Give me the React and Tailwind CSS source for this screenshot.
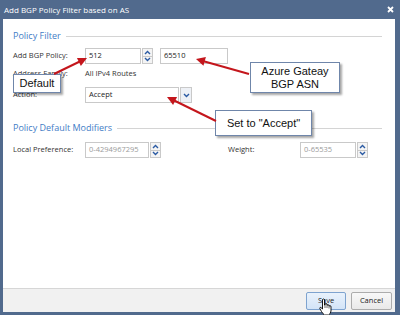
import React from "react";

const F = { fontFamily: '"Open Sans", "Noto Sans", sans-serif' };

function Chev({ up }) {
  return (
    <svg width="7" height="5" viewBox="0 0 7 5">
      <path d={up ? "M1 4 L3.5 1.5 L6 4" : "M1 1 L3.5 3.5 L6 1"} fill="none" stroke="#2a5aa3" strokeWidth="1.4" />
    </svg>
  );
}

function Spinner() {
  return (
    <div className="flex flex-col w-[11px] h-[16px] ml-[1px]">
      <div className="flex-1 flex items-center justify-center border border-[#c9c9c9] bg-[#f4f4f4]"><Chev up /></div>
      <div className="flex-1 flex items-center justify-center border border-t-0 border-[#c9c9c9] bg-[#f4f4f4]"><Chev /></div>
    </div>
  );
}

function Input({ w, value, placeholder }) {
  return (
    <div className={`h-[16px] border border-[#c9c9c9] bg-white flex items-center px-[3px] text-[7.5px] ${w} ${placeholder ? "text-[#9a9a9a]" : "text-[#222]"}`}>
      {value || placeholder}
    </div>
  );
}

function Arrow({ x1, y1, x2, y2 }) {
  const dx = x2 - x1, dy = y2 - y1;
  const L = Math.hypot(dx, dy);
  const ux = dx / L, uy = dy / L;
  const hl = 9, hw = 4.5;
  const bx = x2 - ux * hl, by = y2 - uy * hl;
  const p = `${x2},${y2} ${bx - uy * hw},${by + ux * hw} ${bx + uy * hw},${by - ux * hw}`;
  return (
    <g>
      <line x1={x1} y1={y1} x2={bx + ux} y2={by + uy} stroke="#c4161c" strokeWidth="2" />
      <polygon points={p} fill="#c4161c" />
    </g>
  );
}

function Callout({ cls, children }) {
  return (
    <div
      className={`absolute bg-white border border-[#6f86aa] shadow-[2px_2px_2px_rgba(0,0,0,0.35)] flex flex-col items-center justify-center text-[11px] leading-[13px] text-[#111] ${cls}`}
      style={{ fontFamily: '"Liberation Sans", Arial, sans-serif' }}
    >
      {children}
    </div>
  );
}

export default function App() {
  return (
    <div className="relative w-[400px] h-[315px] bg-[#516a8d] flex flex-col overflow-hidden" style={F}>
      <div className="h-[19px] flex items-center justify-between pl-[4px] pr-[6px] text-white text-[8px]">
        <span>Add BGP Policy Filter based on AS</span>
        <svg width="7" height="7" viewBox="0 0 7 7">
          <path d="M1 1 L6 6 M6 1 L1 6" stroke="white" strokeWidth="1.8" />
        </svg>
      </div>
      <div className="flex-1 ml-[3px] mr-[5px] mb-[3px] bg-white flex flex-col">
        <div className="flex-1 flex flex-col pl-[10px] pr-[13px]">
          <div className="mt-[11px] h-[12px] flex items-center gap-[5px]">
            <span className="text-[9px] text-[#3f7dc6]">Policy Filter</span>
            <div className="flex-1 h-px bg-[#d4d4d4]" />
          </div>
          <div className="mt-[6px] h-[16px] flex items-center text-[7.5px] text-[#333]">
            <span className="w-[72px]">Add BGP Policy:</span>
            <Input w="w-[56px]" value="512" />
            <Spinner />
            <div className="w-[7px]" />
            <Input w="w-[68px]" value="65510" />
          </div>
          <div className="mt-[4px] h-[12px] flex items-center text-[7.5px] text-[#333]">
            <span className="w-[72px]">Address Family:</span>
            <span>All IPv4 Routes</span>
          </div>
          <div className="mt-[7px] h-[16px] flex items-center text-[7.5px] text-[#333]">
            <span className="w-[72px]">Action:</span>
            <div className="w-[94px] h-[16px] border border-[#c9c9c9] flex items-center px-[3px] text-[#222]">Accept</div>
            <div className="ml-[1px] w-[12px] h-[16px] border border-[#c9c9c9] bg-[#eef1f6] flex items-center justify-center"><Chev /></div>
          </div>
          <div className="mt-[19px] h-[12px] flex items-center gap-[5px]">
            <span className="text-[9px] text-[#3f7dc6]">Policy Default Modifiers</span>
            <div className="flex-1 h-px bg-[#d4d4d4]" />
          </div>
          <div className="mt-[8px] h-[16px] flex items-center text-[7.5px] text-[#333]">
            <span className="w-[72px]">Local Preference:</span>
            <Input w="w-[64px]" placeholder="0-4294967295" />
            <Spinner />
            <div className="w-[67px]" />
            <span className="w-[72px]">Weight:</span>
            <Input w="w-[56px]" placeholder="0-65535" />
            <Spinner />
          </div>
        </div>
        <div className="h-[24px] border-t border-[#d6d6d6] bg-[#f1f1f1] flex items-center justify-end gap-[5px] pr-[3px] text-[7.5px] text-[#222]">
          <div className="w-[40px] h-[18px] rounded-[2px] border border-[#7ea3cf] bg-[linear-gradient(#e9f2fc,#d3e4f7)] flex items-center justify-center">Save</div>
          <div className="w-[41px] h-[18px] rounded-[2px] border border-[#acacac] bg-[linear-gradient(#f8f8f8,#e9e9e9)] flex items-center justify-center">Cancel</div>
        </div>
      </div>

      <Callout cls="left-[13px] top-[74px] w-[48px] h-[19px]">Default</Callout>
      <Callout cls="left-[250px] top-[62px] w-[90px] h-[31px]">
        <span>Azure Gateay</span>
        <span>BGP ASN</span>
      </Callout>
      <Callout cls="left-[215px] top-[110px] w-[97px] h-[26px]">Set to "Accept"</Callout>

      <svg className="absolute inset-0 pointer-events-none" width="400" height="315">
        <Arrow x1={54} y1={74} x2={87} y2={58} />
        <Arrow x1={249} y1={74} x2={196} y2={59} />
        <Arrow x1={216} y1={121} x2={167} y2={97} />
      </svg>

      <svg className="absolute left-[319px] top-[298px] pointer-events-none" width="13" height="18" viewBox="0 0 13 18">
        <path
          d="M3.5 1.5 Q4.5 0.5 5.5 1.5 L5.5 7 L6 7 L6 6 Q7 5 8 6 L8 7.2 Q9 6.3 10 7.2 L10 8 Q11 7.4 12 8.2 L12 13 Q11.5 16 9.5 17 L5.5 17 Q4 16 2.5 13.5 L0.8 10.5 Q0.6 9.3 1.8 9.4 L3.5 11 Z"
          fill="white"
          stroke="black"
          strokeWidth="0.9"
        />
        <path d="M6 7 L6 10 M8 7.2 L8 10 M10 8 L10 10.5" stroke="black" strokeWidth="0.6" />
      </svg>
    </div>
  );
}
